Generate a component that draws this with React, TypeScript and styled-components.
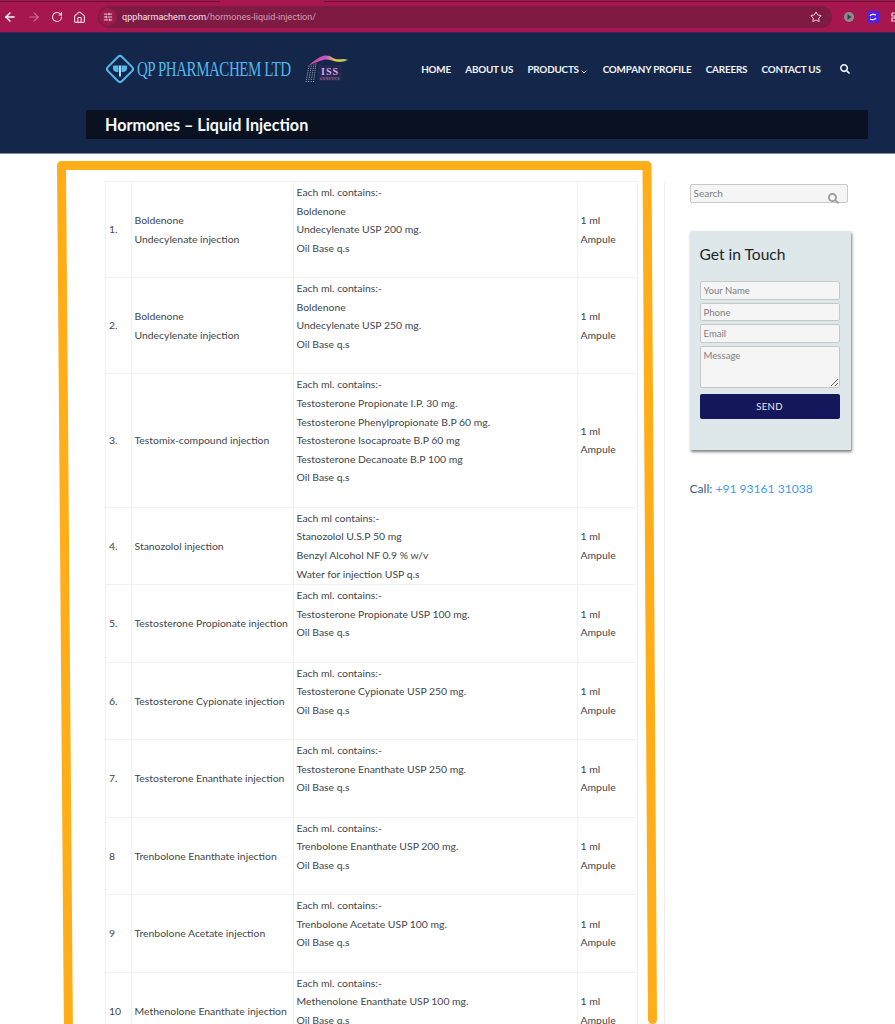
import React from "react";
import styled, { createGlobalStyle } from "styled-components";
import { ArrowLeft, ArrowRight, RotateCw, Home, SlidersHorizontal, Star, ChevronDown } from "lucide-react";
import { FaSearch } from "react-icons/fa";

const Global = createGlobalStyle`
  html, body { margin: 0; padding: 0; background: #fff; }
  body { font-family: Lato, "Open Sans", sans-serif; }
  * { box-sizing: border-box; }
`;

const Page = styled.div`
  position: relative;
  width: 895px;
  height: 1024px;
  overflow: hidden;
  background: #fff;
`;

const TabStrip = styled.div`
  height: 5px;
  background: #a6174f;
  border-top: 1px solid #a6174f;
  display: flex;
  align-items: flex-start;
`;
const TabEdge = styled.div<{ $w?: number }>`
  height: 1px;
  background: #6d1038;
  ${(p) => (p.$w ? `width: ${p.$w}px;` : "flex: 1;")}
`;
const TabGap = styled.div`
  width: 104px;
`;

const Toolbar = styled.div`
  height: 27px;
  background: #a6174f;
  display: flex;
  align-items: flex-start;
  padding: 1px 0 0 0;
  color: #f6dbe5;
  overflow: hidden;
`;
const NavIcons = styled.div`
  width: 98px;
  height: 22px;
  display: flex;
  align-items: center;
  gap: 10px;
  padding-left: 3px;
  flex: none;
`;
const Dim = styled.span`
  display: flex;
  opacity: 0.45;
`;
const UrlBar = styled.div`
  width: 734px;
  height: 22px;
  background: #7f1a43;
  border-radius: 11px;
  display: flex;
  align-items: center;
  flex: none;
  padding: 0 10px 0 0;
`;
const SiteChip = styled.div`
  width: 18px;
  height: 18px;
  margin: 0 5px 0 1px;
  border-radius: 50%;
  background: #9c1b4c;
  display: flex;
  align-items: center;
  justify-content: center;
`;
const Url = styled.span`
  font-family: Roboto, "Noto Sans", sans-serif;
  font-size: 9.1px;
  color: #f8e3ea;
  flex: 1;
`;
const UrlPath = styled.span`
  color: #d39db2;
`;
const Exts = styled.div`
  display: flex;
  align-items: center;
  height: 22px;
  gap: 12px;
  padding-left: 11px;
  flex: none;
`;
const ChromeLine = styled.div`
  height: 1px;
  background: #3c2350;
`;

const Header = styled.header`
  height: 120px;
  background: #14274b;
`;
const HeaderRow = styled.div`
  height: 72px;
  padding: 0 45px 0 104px;
  display: flex;
  align-items: center;
  justify-content: space-between;
`;
const Brand = styled.div`
  display: flex;
  align-items: center;
`;
const BrandName = styled.span`
  font-family: "Liberation Serif", serif;
  font-size: 20px;
  color: #55b8ec;
  white-space: nowrap;
  display: inline-block;
  width: 155px;
  margin-left: 1px;
  letter-spacing: -0.62px;
  transform: scaleX(0.75);
  transform-origin: left center;
`;
const Nav = styled.nav`
  display: flex;
  align-items: center;
  gap: 14.3px;
`;
const NavLink = styled.a`
  font-size: 9.85px;
  font-weight: 700;
  color: #f2f4f7;
  letter-spacing: -0.18px;
  white-space: nowrap;
  display: flex;
  align-items: center;
`;
const TitleBar = styled.div`
  height: 29px;
  margin: 5px 27px 0 86px;
  background: #0a1222;
  display: flex;
  align-items: center;
  padding-left: 19px;
`;
const PageTitle = styled.h1`
  margin: 0;
  font-size: 16.15px;
  font-weight: 700;
  color: #f8f9fa;
`;
const HeaderEdge = styled.div`
  height: 1px;
  background: #7f8aa0;
`;

const Main = styled.main`
  display: flex;
  align-items: flex-start;
  padding: 27px 0 0 105px;
`;
const Table = styled.table`
  width: 532px;
  flex: none;
  table-layout: fixed;
  border-collapse: collapse;
  font-size: 10.4px;
  line-height: 18.62px;
  color: #42464b;
`;
const Td = styled.td`
  border: 1px solid #f1f1f1;
  padding: 1px 3px;
  vertical-align: middle;
`;

const Sidebar = styled.aside`
  width: 232px;
  margin-left: 25.5px;
  height: 870px;
  border-left: 1px solid #ececec;
  padding: 3px 0 0 25px;
  flex: none;
`;
const SearchBox = styled.div`
  position: relative;
  width: 158px;
  height: 19px;
`;
const SearchInput = styled.input`
  display: block;
  width: 100%;
  height: 100%;
  border: 1px solid #c9c9c9;
  border-radius: 2px;
  background: #f5f5f5;
  padding: 0 3px 2px 3px;
  font: 400 10px Lato, sans-serif;
  outline: none;
  &::placeholder { color: #808080; opacity: 1; }
`;
const SearchGlyph = styled.span`
  position: absolute;
  right: 9px;
  top: 8.500px;
  color: #9a9a9a;
  display: flex;
`;
const Card = styled.div`
  width: 161px;
  height: 219px;
  margin-top: 28px;
  background: #dee7ea;
  box-shadow: 1px 2px 3px rgba(0, 0, 0, 0.5);
  padding: 12px 10px 0 10px;
  border-radius: 1px;
`;
const CardTitle = styled.h3`
  margin: 0 0 16px;
  font-size: 15.6px;
  font-weight: 400;
  line-height: 22px;
  color: #20262b;
`;
const Form = styled.div`
  display: flex;
  flex-direction: column;
  gap: 3px;
`;
const Field = styled.input`
  width: 140px;
  height: 18.700px;
  border: 1px solid #c8c8c8;
  border-radius: 2px;
  background: #f5f5f5;
  padding: 0 3px;
  font: 400 9.6px Lato, sans-serif;
  outline: none;
  &::placeholder { color: #808080; opacity: 1; }
`;
const MessageField = styled.textarea`
  display: block;
  width: 140px;
  height: 42px;
  border: 1px solid #c8c8c8;
  border-radius: 2px;
  background: #f5f5f5;
  padding: 3px 3px;
  font: 400 9.6px Lato, sans-serif;
  outline: none;
  &::placeholder { color: #808080; opacity: 1; }
`;
const SendButton = styled.button`
  width: 140px;
  height: 25px;
  margin-top: 3px;
  border: 0;
  border-radius: 2px;
  background: #14185a;
  color: #e9eaf4;
  font: 400 9.6px Lato, sans-serif;
  letter-spacing: 0.3px;
`;
const CallLine = styled.p`
  margin: 31px 0 0;
  font-size: 12.1px;
  line-height: 16px;
  color: #31628f;
`;
const Phone = styled.a`
  color: #3f9cf2;
`;

const Highlight = styled.svg`
  position: absolute;
  left: 0;
  top: 0;
  pointer-events: none;
`;

type Row = { n: string; name: string[]; c: string[]; trail?: boolean };
const rows: Row[] = [
  { n: "1.", name: ["Boldenone", "Undecylenate injection"], c: ["Each ml. contains:-", "Boldenone", "Undecylenate USP 200 mg.", "Oil Base q.s"], trail: true },
  { n: "2.", name: ["Boldenone", "Undecylenate injection"], c: ["Each ml. contains:-", "Boldenone", "Undecylenate USP 250 mg.", "Oil Base q.s"], trail: true },
  { n: "3.", name: ["Testomix-compound injection"], c: ["Each ml. contains:-", "Testosterone Propionate I.P. 30 mg.", "Testosterone Phenylpropionate B.P 60 mg.", "Testosterone Isocaproate B.P 60 mg", "Testosterone Decanoate B.P 100 mg", "Oil Base q.s"], trail: true },
  { n: "4.", name: ["Stanozolol injection"], c: ["Each ml contains:-", "Stanozolol U.S.P 50 mg", "Benzyl Alcohol NF 0.9 % w/v", "Water for injection USP q.s"] },
  { n: "5.", name: ["Testosterone Propionate injection"], c: ["Each ml. contains:-", "Testosterone Propionate USP 100 mg.", "Oil Base q.s"], trail: true },
  { n: "6.", name: ["Testosterone Cypionate injection"], c: ["Each ml. contains:-", "Testosterone Cypionate USP 250 mg.", "Oil Base q.s"], trail: true },
  { n: "7.", name: ["Testosterone Enanthate injection"], c: ["Each ml. contains:-", "Testosterone Enanthate USP 250 mg.", "Oil Base q.s"], trail: true },
  { n: "8", name: ["Trenbolone Enanthate injection"], c: ["Each ml. contains:-", "Trenbolone Enanthate USP 200 mg.", "Oil Base q.s"], trail: true },
  { n: "9", name: ["Trenbolone Acetate injection"], c: ["Each ml. contains:-", "Trenbolone Acetate USP 100 mg.", "Oil Base q.s"], trail: true },
  { n: "10", name: ["Methenolone Enanthate injection"], c: ["Each ml. contains:-", "Methenolone Enanthate USP 100 mg.", "Oil Base q.s"], trail: true },
];

const Lines = ({ items, trail }: { items: string[]; trail?: boolean }) => (
  <>
    {items.map((t, i) => (
      <React.Fragment key={i}>
        {t}
        {i < items.length - 1 && <br />}
      </React.Fragment>
    ))}
    {trail && (
      <>
        <br />
        <br />
      </>
    )}
  </>
);

const DiamondLogo = () => (
  <svg width="32" height="32" viewBox="0 0 32 32" fill="none">
    <rect x="6" y="6" width="20" height="20" rx="3" transform="rotate(45 16 16)" stroke="#55b8ec" strokeWidth="2" />
    <path d="M9 12.500h5.500v6.500h-1.500c-2.200 0-4-1.500-4-3.500z" fill="#55b8ec" />
    <path d="M17.500 12.500h5.500v3c0 2-1.800 3.500-4 3.500h-1.500z" fill="#55b8ec" />
    <rect x="15" y="12.500" width="2" height="11" fill="#9fdcf8" />
  </svg>
);

const IssLogo = () => (
  <svg width="44" height="28" viewBox="0 0 44 28" style={{ marginLeft: 13 }}>
    <defs>
      <linearGradient id="issArc" x1="0" x2="1" y1="0" y2="0">
        <stop offset="0" stopColor="#d83f8c" />
        <stop offset="0.45" stopColor="#c85ac8" />
        <stop offset="0.7" stopColor="#e8c83c" />
        <stop offset="1" stopColor="#8fd06a" />
      </linearGradient>
    </defs>
    <path d="M3 11C9 6 15 .5 21 .5C26 .5 28 4 32 4.200C36 4.400 39 3 43 5C38 7 35 7.500 31 6.500C27 5.500 24 4 20 4.500C14 5.500 8 9 3 11Z" fill="url(#issArc)" />
    <path d="M1 27L4 11M3.500 27L6.500 10M6 27L9 9M8.500 27L11 8" stroke="#c7ccd8" strokeWidth="0.8" strokeDasharray="1 1.200" />
    <rect x="13" y="10" width="24" height="16" fill="#26264f" />
    <text x="25" y="19.500" textAnchor="middle" fontFamily="Liberation Serif, serif" fontWeight="700" fontSize="10" letterSpacing="1" fill="#d9a8e6">ISS</text>
    <text x="25" y="24.500" textAnchor="middle" fontFamily="Liberation Serif, serif" fontSize="3.600" letterSpacing="0.3" fill="#c39ad2">GENETICS</text>
  </svg>
);

export default function App() {
  return (
    <Page>
      <Global />
      <TabStrip>
        <TabEdge $w={220} />
        <TabGap />
        <TabEdge />
      </TabStrip>
      <Toolbar>
        <NavIcons>
          <ArrowLeft size={14} strokeWidth={2.4} color="#fff" />
          <Dim><ArrowRight size={14} strokeWidth={2} /></Dim>
          <RotateCw size={12} strokeWidth={2.2} />
          <Home size={13} strokeWidth={2} />
        </NavIcons>
        <UrlBar>
          <SiteChip><SlidersHorizontal size={10} strokeWidth={2.2} /></SiteChip>
          <Url>qppharmachem.com<UrlPath>/hormones-liquid-injection/</UrlPath></Url>
          <Star size={12} strokeWidth={2} />
        </UrlBar>
        <Exts>
          <svg width="12" height="12" viewBox="0 0 12 12">
            <circle cx="6" cy="6" r="5" fill="#8d8d90" />
            <path d="M4.500 3l4 3-4 3z" fill="#3d3d40" />
          </svg>
          <svg width="12" height="12" viewBox="0 0 12 12">
            <rect width="12" height="12" rx="2" fill="#4a22e8" />
            <path d="M3 5c1-2 4-2 6-1M9 7c-1 2-4 2-6 1" stroke="#fff" strokeWidth="1.300" fill="none" />
          </svg>
          <svg width="8" height="12" viewBox="0 0 8 12">
            <path d="M1 2h7M1 2v3h3v2H1v3h7" stroke="#f3d5e0" strokeWidth="1.200" fill="none" />
          </svg>
        </Exts>
      </Toolbar>
      <ChromeLine />
      <Header>
        <HeaderRow>
          <Brand>
            <DiamondLogo />
            <BrandName>QP PHARMACHEM LTD</BrandName>
            <IssLogo />
          </Brand>
          <Nav>
            <NavLink>HOME</NavLink>
            <NavLink>ABOUT US</NavLink>
            <NavLink>PRODUCTS<ChevronDown size={8} strokeWidth={3} style={{ margin: "5px 0 0 1.500px" }} /></NavLink>
            <NavLink>COMPANY PROFILE</NavLink>
            <NavLink>CAREERS</NavLink>
            <NavLink>CONTACT US</NavLink>
            <NavLink style={{ marginLeft: 5 }}><FaSearch size={10} /></NavLink>
          </Nav>
        </HeaderRow>
        <TitleBar>
          <PageTitle>Hormones – Liquid Injection</PageTitle>
        </TitleBar>
      </Header>
      <HeaderEdge />
      <Main>
        <Table>
          <colgroup>
            <col style={{ width: 25.5 }} />
            <col style={{ width: 162 }} />
            <col style={{ width: 284 }} />
            <col style={{ width: 60.5 }} />
          </colgroup>
          <tbody>
            {rows.map((r) => (
              <tr key={r.n}>
                <Td>{r.n}</Td>
                <Td><Lines items={r.name} /></Td>
                <Td><Lines items={r.c} trail={r.trail} /></Td>
                <Td>1 ml<br />Ampule</Td>
              </tr>
            ))}
          </tbody>
        </Table>
        <Sidebar>
          <SearchBox>
            <SearchInput placeholder="Search" />
            <SearchGlyph><FaSearch size={11} /></SearchGlyph>
          </SearchBox>
          <Card>
            <CardTitle>Get in Touch</CardTitle>
            <Form>
              <Field placeholder="Your Name" />
              <Field placeholder="Phone" />
              <Field placeholder="Email" />
              <MessageField placeholder="Message" />
              <SendButton>SEND</SendButton>
            </Form>
          </Card>
          <CallLine>Call: <Phone>+91 93161 31038</Phone></CallLine>
        </Sidebar>
      </Main>
      <Highlight width="895" height="1024" viewBox="0 0 895 1024" fill="none">
        <path d="M68.500 1040L61.500 165.500H647L652.500 1019.500" stroke="#ffae19" strokeWidth="9" strokeLinejoin="round" strokeLinecap="round" />
      </Highlight>
    </Page>
  );
}
